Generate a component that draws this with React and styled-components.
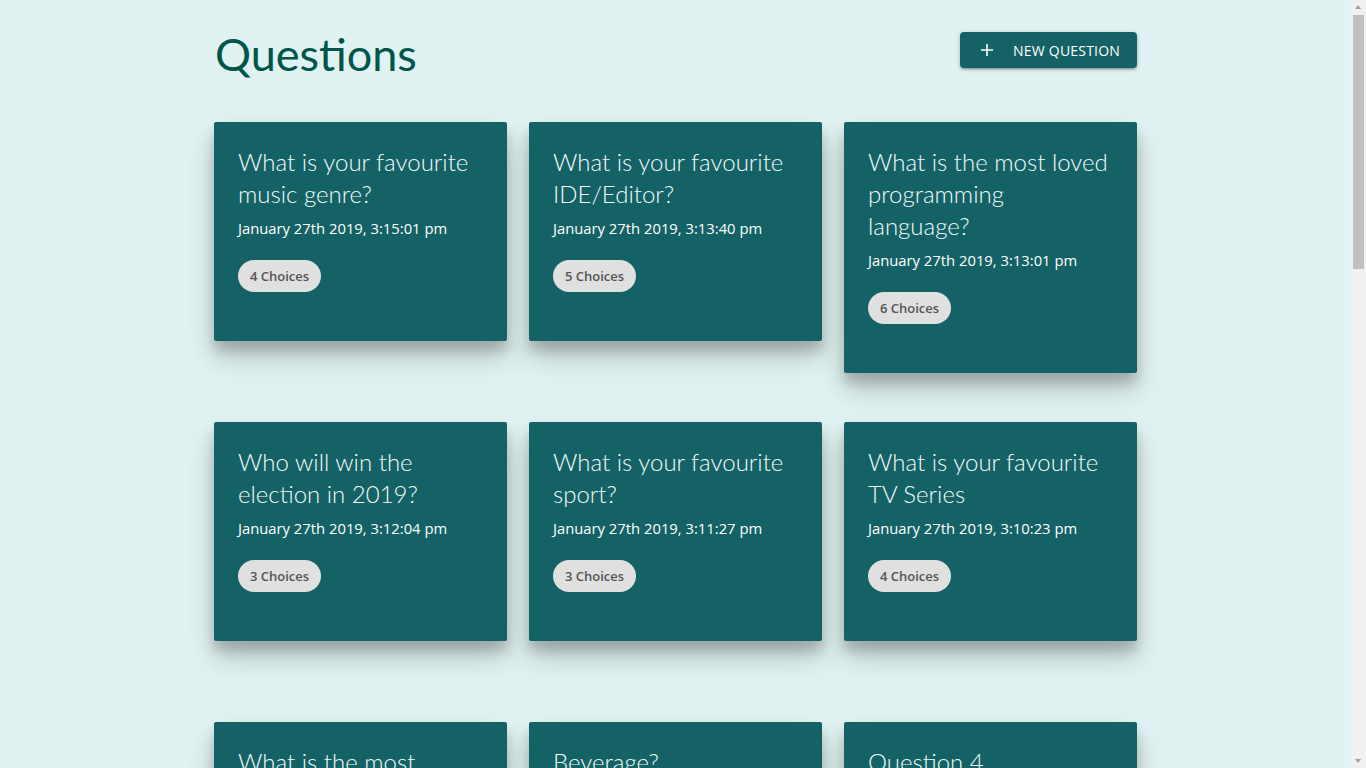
import React from "react";
import styled, { createGlobalStyle } from "styled-components";

const Global = createGlobalStyle`
  html, body { margin: 0; padding: 0; }
  body {
    background: #e0f2f1;
    font-family: "Lato", "Open Sans", sans-serif;
    padding-right: 15px;
  }
`;

const Page = styled.div`
  width: 923px;
  margin: 0 auto;
  padding: 24px 0 80px;
`;

const Header = styled.header`
  display: flex;
  justify-content: space-between;
  align-items: flex-start;
  height: 98px;
`;

const Title = styled.h1`
  margin: 0;
  font-size: 45px;
  line-height: 60px;
  font-weight: 400;
  color: #00554a;
  padding-left: 1px;
`;

const NewButton = styled.button`
  margin-top: 8px;
  display: flex;
  align-items: center;
  gap: 20px;
  height: 36px;
  padding: 0 17px 0 21px;
  border: none;
  border-radius: 4px;
  background: #156266;
  color: #fff;
  font-family: "Open Sans", sans-serif;
  font-size: 14px;
  font-weight: 500;
  text-transform: uppercase;
  letter-spacing: 0.2px;
  box-shadow: 0 1px 5px rgba(0,0,0,0.2), 0 2px 2px rgba(0,0,0,0.14), 0 3px 1px -2px rgba(0,0,0,0.12);
  cursor: pointer;
`;

const Grid = styled.div`
  display: grid;
  grid-template-columns: repeat(3, 293px);
  grid-auto-rows: 278px;
  column-gap: 22px;
  row-gap: 22px;
  align-items: start;
`;

const Card = styled.article`
  background: #156266;
  border-radius: 2px;
  padding: 24px 28px 49px 24px;
  color: #fff;
  box-shadow: 0 16px 28px rgba(0,0,0,0.2), 0 10px 12px rgba(0,0,0,0.16);
`;

const CardTitle = styled.h2`
  margin: 0;
  font-size: 24px;
  line-height: 32px;
  font-weight: 300;
  color: #f2fbfa;
`;

const DateText = styled.div`
  margin-top: 8px;
  font-family: "Open Sans", sans-serif;
  font-size: 14.8px;
  line-height: 20px;
  font-weight: 500;
  color: #fff;
`;

const Chip = styled.span`
  display: inline-flex;
  align-items: center;
  margin-top: 22px;
  height: 32px;
  padding: 0 12px;
  border-radius: 16px;
  background: #e0e0e0;
  color: #555;
  font-family: "Open Sans", sans-serif;
  font-size: 13px;
  font-weight: 600;
`;

const Scrollbar = styled.div`
  position: fixed;
  top: 0;
  right: 0;
  width: 15px;
  height: 100vh;
  background: #f1f1f1;
`;

const ScrollArrow = styled.div`
  position: absolute;
  left: 4px;
  width: 0;
  height: 0;
  border-left: 3.5px solid transparent;
  border-right: 3.5px solid transparent;
  ${(p) => (p.$down ? "bottom: 5px; border-top: 4px solid #a3a3a3;" : "top: 5px; border-bottom: 4px solid #a3a3a3;")}
`;

const ScrollThumb = styled.div`
  position: absolute;
  left: 2px;
  right: 2px;
  top: 15px;
  height: 254px;
  background: #c1c1c1;
`;

const questions = [
  ["What is your favourite music genre?", "January 27th 2019, 3:15:01 pm", 4],
  ["What is your favourite IDE/Editor?", "January 27th 2019, 3:13:40 pm", 5],
  ["What is the most loved programming language?", "January 27th 2019, 3:13:01 pm", 6],
  ["Who will win the election in 2019?", "January 27th 2019, 3:12:04 pm", 3],
  ["What is your favourite sport?", "January 27th 2019, 3:11:27 pm", 3],
  ["What is your favourite TV Series", "January 27th 2019, 3:10:23 pm", 4],
  ["What is the most popular framework?", "January 27th 2019, 3:09:12 pm", 4],
  ["Beverage?", "January 27th 2019, 3:08:45 pm", 3],
  ["Question 4", "January 27th 2019, 3:07:30 pm", 2],
  ["Question 3", "January 27th 2019, 3:06:10 pm", 2],
  ["Question 2", "January 27th 2019, 3:05:02 pm", 3],
  ["Question 1", "January 27th 2019, 3:04:11 pm", 2],
  ["Favourite season?", "January 27th 2019, 3:03:20 pm", 4],
  ["Favourite colour?", "January 27th 2019, 3:02:40 pm", 5],
  ["Tabs or spaces?", "January 27th 2019, 3:01:55 pm", 2],
  ["Cats or dogs?", "January 27th 2019, 3:01:10 pm", 2],
  ["Favourite operating system?", "January 27th 2019, 3:00:35 pm", 3],
  ["Favourite browser?", "January 27th 2019, 2:59:48 pm", 4],
  ["Morning or night?", "January 27th 2019, 2:58:20 pm", 2],
  ["Favourite food?", "January 27th 2019, 2:57:02 pm", 5],
  ["Test question", "January 27th 2019, 2:56:14 pm", 2],
];

const PlusIcon = () => (
  <svg width="12" height="12" viewBox="0 0 12 12" aria-hidden="true">
    <path d="M6 0v12M0 6h12" stroke="#fff" strokeWidth="1.6" />
  </svg>
);

export default function App() {
  return (
    <>
      <Global />
      <Page>
        <Header>
          <Title>Questions</Title>
          <NewButton>
            <PlusIcon />
            New Question
          </NewButton>
        </Header>
        <Grid>
          {questions.map(([q, d, n]) => (
            <Card key={q}>
              <CardTitle>{q}</CardTitle>
              <DateText>{d}</DateText>
              <Chip>{n} Choices</Chip>
            </Card>
          ))}
        </Grid>
      </Page>
      <Scrollbar>
        <ScrollArrow />
        <ScrollThumb />
        <ScrollArrow $down />
      </Scrollbar>
    </>
  );
}
